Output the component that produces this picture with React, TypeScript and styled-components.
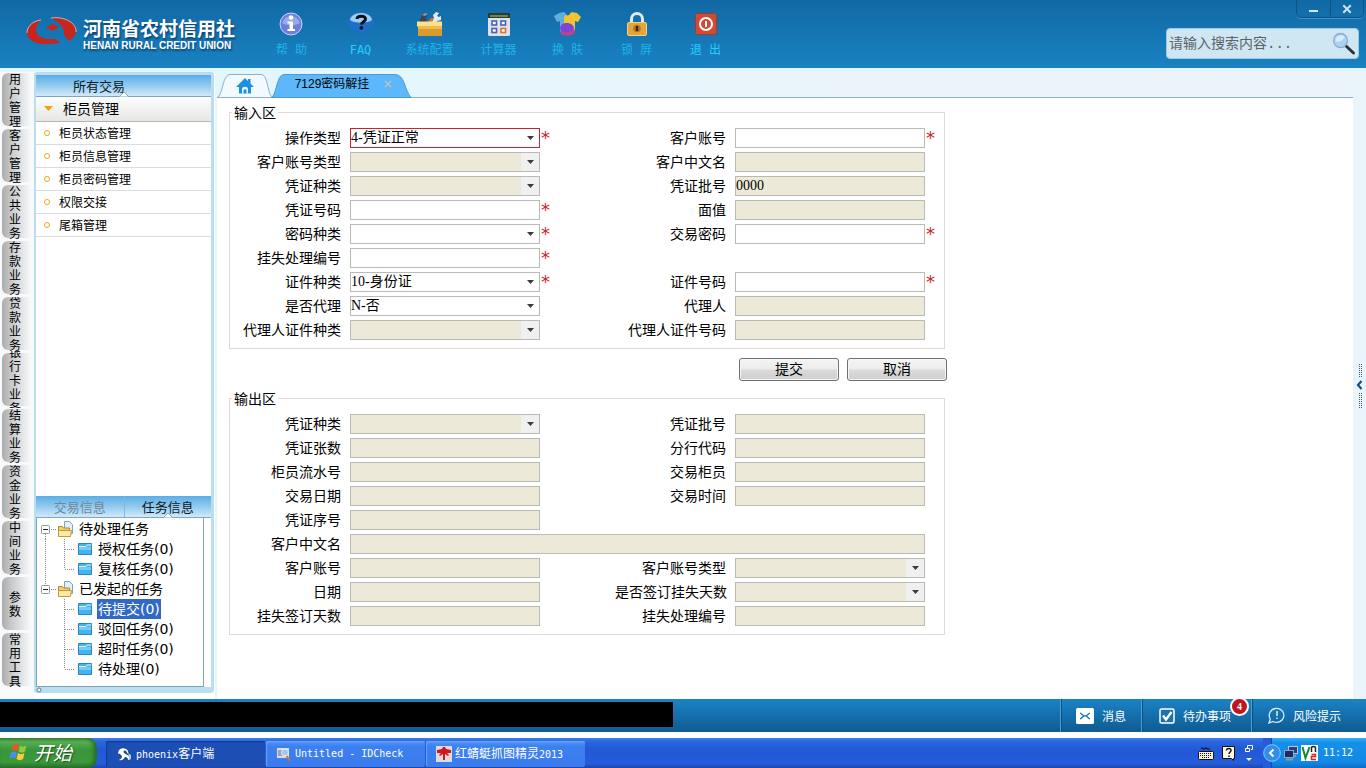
import React from "react";
import styled, { createGlobalStyle, css } from "styled-components";

const cjk = `"Noto Sans CJK SC", sans-serif`;
const sans = `"Liberation Sans", ${cjk}`;
const serif = `"Liberation Serif", ${cjk}`;
const mono = `"DejaVu Sans Mono", ${cjk}`;

const GlobalStyle = createGlobalStyle`
  * { box-sizing: border-box; }
  body { margin: 0; background: #fff; font-family: ${sans}; font-size: 14px; color: #000; }
  button, input, select { font: inherit; color: inherit; margin: 0; padding: 0; border: 0; border-radius: 0; background: none; }
  button { cursor: pointer; }
  ul { list-style: none; margin: 0; padding: 0; }
  svg { display: block; flex: none; }
`;

const Page = styled.div`
  min-height: 100vh;
  display: flex;
  flex-direction: column;
`;

/* ---------- header ---------- */

const Header = styled.header`
  height: 68px;
  display: flex;
  background: linear-gradient(#1169a5, #1a82c2);
`;

const Brand = styled.div`
  width: 257px;
  padding: 16px 0 0 26px;
  display: flex;
  align-items: flex-start;
  gap: 6px;
  color: #fff;
  text-shadow: 1px 2px 2px rgba(0, 30, 70, 0.6);
`;

const BrandName = styled.div`
  font: bold 19px/24px ${cjk};
  white-space: nowrap;
`;

const BrandLatin = styled.div`
  font: bold 10px/12px ${sans};
  white-space: nowrap;
`;

const Tools = styled.nav`
  flex: 1;
  display: flex;
`;

const Tool = styled.button<{ $bright?: boolean }>`
  width: 69px;
  padding-top: 11px;
  display: flex;
  flex-direction: column;
  align-items: center;
  gap: 4px;
  font: 12px/18px ${mono};
  white-space: pre;
  color: ${(p) => (p.$bright ? "#22d0fb" : "#1cb4ea")};
`;

const HeaderSide = styled.div`
  display: flex;
  flex-direction: column;
  align-items: flex-end;
  gap: 10px;
  padding-right: 7px;
`;

const WindowControls = styled.div`
  height: 18px;
  display: flex;
  margin-right: -5px;
  border: 1px solid #0d5488;
  border-top: 0;
  border-radius: 0 0 5px 5px;
  box-shadow: 0 1px 0 #3b93c9;
`;

const WindowButton = styled.button`
  width: 33px;
  display: grid;
  place-items: center;
  & + & { border-left: 1px solid #0d5488; }
`;

const Search = styled.label`
  width: 193px;
  height: 31px;
  display: flex;
  align-items: center;
  padding: 0 2px;
  border: 1px solid #9ccae5;
  border-radius: 4px;
  background: #cfe6f3;
`;

const SearchInput = styled.input`
  flex: 1;
  min-width: 0;
  outline: 0;
  font: 14px/20px "Liberation Mono", ${cjk};
  &::placeholder { color: #5a6268; opacity: 1; }
`;

/* ---------- body ---------- */

const Body = styled.div`
  flex: 1;
  display: flex;
  border-top: 4px solid #e2f5fc;
`;

const Rail = styled.nav`
  width: 34px;
  padding: 1px 0 0 2px;
  background: #f8f9fa;
`;

const RailTab = styled.button`
  width: 100%;
  height: 53px;
  margin-bottom: 3px;
  padding-right: 6px;
  overflow: clip;
  overflow-clip-margin: 2px;
  display: flex;
  align-items: center;
  justify-content: center;
  border-radius: 6px 0 0 6px;
  background: linear-gradient(90deg, #aaacad, #c8cacb 30%, #f8f9fa 90%);
`;

const RailText = styled.span`
  width: 12px;
  flex: none;
  margin: -2px 0;
  font: 12px/14px ${cjk};
  word-break: break-all;
`;

const Sidebar = styled.aside`
  width: 180px;
  margin-bottom: 6px;
  display: flex;
  flex-direction: column;
  border: solid #b9deee;
  border-width: 3px 3px 0 2px;
  border-radius: 3px;
`;

const BlueTabs = styled.div`
  height: 22px;
  display: flex;
  border-bottom: 1px solid #7ba7c4;
  background: linear-gradient(#5aaee5, #8cc7ee 45%, #d2e9f8);
`;

const BlueTab = styled.button<{ $muted?: boolean }>`
  position: relative;
  width: 50%;
  font: 13px/20px ${cjk};
  color: ${(p) => (p.$muted ? "#6f8798" : "#0c1a26")};
  & + & { border-left: 1px solid #86b8da; }
`;

const WideTab = styled(BlueTab)`
  width: 175px;
  padding-right: 49px;
`;

const Notch = styled.svg`
  position: absolute;
  left: 50%;
  bottom: -1px;
  margin-left: -6px;
`;

const Section = styled.button`
  height: 25px;
  display: flex;
  align-items: center;
  gap: 10px;
  padding: 0 0 2px 8px;
  border-bottom: 1px solid #b5b5b5;
  background: linear-gradient(#fdfdfd, #e6e6e4);
  font: 14px/20px ${cjk};
`;

const MenuItem = styled.a`
  height: 23px;
  display: flex;
  align-items: center;
  gap: 9px;
  padding-left: 8px;
  border-bottom: 1px solid #dcdcdc;
  font: 12px/18px ${cjk};
  color: #000;
  text-decoration: none;
`;

const Bullet = styled.span`
  width: 6px;
  height: 6px;
  border: 1px solid #eba91c;
  border-radius: 50%;
`;

const Spacer = styled.div`
  flex: 1;
`;

const Tree = styled.ul`
  margin-right: 7px;
  padding: 1px 0 7px;
  border: 1px solid #7fa3b8;
  border-top: 0;
`;

const TreeRow = styled.li`
  height: 20px;
  display: flex;
  align-items: center;
  font: 14px/20px "DejaVu Sans", ${cjk};
`;

const TreeLabel = styled.span<{ $selected?: boolean }>`
  margin-left: 4px;
  padding: 0 1px;
  white-space: nowrap;
  ${(p) => p.$selected && css`background: #316ac5; color: #fff;`}
`;

const SidebarFoot = styled.div`
  height: 6px;
  background: #b9deee;
`;

const Main = styled.main`
  flex: 1;
  min-width: 0;
  margin-left: 1px;
  border-left: 2px solid #e2f8fd;
`;

const TabStrip = styled.div`
  height: 26px;
  display: flex;
  align-items: flex-end;
  border-bottom: 1px solid #8fb0c2;
  background: linear-gradient(90deg, #e2f6fd, #ebf4fa 60%);
`;

const Tab = styled.div<{ $overlap?: boolean }>`
  display: grid;
  margin-bottom: -1px;
  margin-left: ${(p) => (p.$overlap ? "-2px" : "0")};
  > * { grid-area: 1 / 1; }
`;

const TabFace = styled.div<{ $titled?: boolean }>`
  position: relative;
  display: flex;
  align-items: center;
  justify-content: center;
  gap: 15px;
  padding-bottom: ${(p) => (p.$titled ? "3px" : "0")};
  padding-left: ${(p) => (p.$titled ? "4px" : "0")};
  font: 12px/18px ${sans};
`;

const PlainButton = styled.button`
  display: flex;
  align-items: center;
`;

const Form = styled.form`
  width: 718px;
  max-width: 100%;
  margin-left: 12px;
  padding-top: 6px;
`;

const Zone = styled.fieldset`
  width: 716px;
  margin: 0;
  padding: 8px 0;
  border: 1px solid #e0d8da;
`;

const ZoneTitle = styled.legend`
  margin-left: 2px;
  padding: 0 2px;
  font: 14px/16px ${cjk};
`;

const Fields = styled.div`
  display: grid;
  grid-template-columns: 385px 1fr;
  gap: 4px 0;
`;

const Field = styled.div<{ $wide?: boolean; $left?: boolean }>`
  display: flex;
  height: 20px;
  ${(p) => p.$left && css`grid-column: 1;`}
  ${(p) => p.$wide && css`grid-column: 1 / -1;`}
`;

const Caption = styled.label`
  width: 111px;
  margin-right: 9px;
  font: 14px/18px ${cjk};
  text-align: right;
  white-space: nowrap;
`;

const box = css`
  width: 100%;
  height: 20px;
  border: 1px solid #b9b9b6;
  font: 14px/18px ${serif};
  outline: 0;
  opacity: 1;
  color: #000;
`;

const TextBox = styled.input<{ $locked?: boolean }>`
  ${box}
  background: ${(p) => (p.$locked ? "#ece9d8" : "#fff")};
`;

const Picker = styled.select<{ $locked?: boolean; $alert?: boolean }>`
  ${box}
  appearance: none;
  border-color: ${(p) => (p.$alert ? "#bf2a30" : "#b9b9b6")};
  background: ${(p) => (p.$locked ? "linear-gradient(90deg, #ece9d8 170px, #f0f0f0 170px)" : "#fff")};
`;

const Control = styled.div<{ $wide?: boolean }>`
  width: ${(p) => (p.$wide ? "575px" : "190px")};
  display: grid;
  align-items: center;
  > * { grid-area: 1 / 1; }
`;

const DropArrow = styled.svg`
  justify-self: end;
  margin-right: 6px;
  pointer-events: none;
`;

const Required = styled.span`
  margin-left: 1px;
  font: 18px/20px "DejaVu Sans", sans-serif;
  color: #d0202a;
`;

const Actions = styled.div`
  display: flex;
  justify-content: flex-end;
  gap: 8px;
  padding: 9px 0;
`;

const FormButton = styled.button`
  width: 100px;
  height: 23px;
  padding-bottom: 2px;
  border: 1px solid #707070;
  border-radius: 3px;
  background: linear-gradient(#f4f4f4, #ececec 48%, #dadada 52%, #cfcfcf);
  box-shadow: inset 0 0 0 1px #f6f6f6;
  font: 14px/19px ${cjk};
`;

const EdgeStrip = styled.div`
  width: 13px;
  display: flex;
  align-items: center;
  justify-content: flex-end;
  background: #e9f4fb;
`;

/* ---------- status bar ---------- */

const StatusBar = styled.footer`
  height: 33px;
  display: flex;
  align-items: stretch;
  margin-bottom: 6px;
  background: linear-gradient(#1a83c6, #0f5b92);
`;

const Ticker = styled.div`
  width: 673px;
  height: 25px;
  margin-top: 3px;
  background: #000;
`;

const StatusItem = styled.button<{ $width: number; $pad: number }>`
  width: ${(p) => p.$width}px;
  padding-left: ${(p) => p.$pad}px;
  display: flex;
  align-items: center;
  gap: 8px;
  position: relative;
  border-left: 1px solid #4aa0d4;
  box-shadow: inset 1px 0 0 #0c4f80;
  color: #fff;
  font: 12px/18px ${cjk};
  white-space: nowrap;
`;

const Badge = styled.span`
  position: absolute;
  top: -2px;
  right: 2px;
  width: 19px;
  height: 19px;
  border: 2px solid #fff;
  border-radius: 50%;
  background: #c4141b;
  font: bold 10px/15px ${serif};
  text-align: center;
`;

/* ---------- taskbar ---------- */

const Taskbar = styled.div`
  height: 30px;
  display: flex;
  background: linear-gradient(#3a80ee, #2a66e0 12%, #2258d4 40%, #245cdc 85%, #1b45ab);
`;

const Start = styled.button`
  width: 97px;
  margin-right: 9px;
  padding: 0 0 3px 9px;
  display: flex;
  align-items: center;
  gap: 5px;
  border-radius: 0 9px 9px 0;
  background: linear-gradient(#3e8f3d, #58b052 12%, #3a953a 40%, #3b9a3b 80%, #2a732a);
  box-shadow: inset -3px 0 4px #246a28;
  color: #fff;
  font: italic 19px/24px ${cjk};
  text-shadow: 1px 1px 1px #1c4f1c;
`;

const Task = styled.button<{ $active?: boolean }>`
  width: 159px;
  height: 26px;
  margin: 3px 1px 0 0;
  padding-left: 10px;
  display: flex;
  align-items: center;
  gap: 3px;
  border-radius: 2px;
  background: ${(p) => (p.$active ? "#1c4eb4" : "linear-gradient(#5a99f8, #3c80f0 20%, #3a7bee)")};
  box-shadow: inset 1px 1px 1px ${(p) => (p.$active ? "#143a8c" : "#6ba6fa")};
  color: #fff;
  font: 12px/18px ${cjk};
  white-space: pre;
`;

const Narrow = styled.span`
  font: 10px/18px ${mono};
`;

const TrayTools = styled.div`
  margin-left: auto;
  display: flex;
  align-items: center;
  gap: 8px;
  padding-right: 9px;
`;

const Tray = styled.div`
  width: 103px;
  display: flex;
  align-items: center;
  gap: 2px;
  color: #fff;
  background: linear-gradient(90deg, #245cdc 8px, #0d4fa8 8px, #0d4fa8 9px, transparent 9px),
    linear-gradient(#35b0f4, #1590ea 15%, #118ae6 80%, #0f6cc4);
`;

const Clock = styled.time`
  margin-left: 3px;
  font: 10px/18px ${mono};
`;

/* ---------- drawings ---------- */

const Logo = () => (
  <svg width="51" height="31" viewBox="0 0 51 31">
    <path d="M15 4C6 5 1 11 1 17c0 7 10 12 21 11l12-1-4-4-9 0C14 22 10 18 10 14c0-4 2-7 5-10z" fill="#c8251f" />
    <path d="M25 2c13-2 26 5 25 14-1 4-4 7-7 9l-5-6c1-8-5-13-13-17z" fill="#c8251f" />
    <path d="M20 11l7-3 6 3-7 4z" fill="#c8251f" />
    <path d="M25 2c13-2 26 5 25 14M15 4C6 5 1 11 1 17" fill="none" stroke="#e8cdb8" strokeWidth="0.8" />
  </svg>
);

const HelpIcon = () => (
  <svg width="26" height="26" viewBox="0 0 26 26">
    <circle cx="12" cy="13" r="11" fill="#6a80da" stroke="#c9d6f5" />
    <path d="M3 12a9.300 9.300 0 0 1 18 0c-5 3-13 3-18 0z" fill="#98aaea" />
    <circle cx="12" cy="6.500" r="2.200" fill="#fff" />
    <path d="M8.500 10.500h5.500v7.500h2v2H8.500v-2h2v-5.500h-2z" fill="#fff" />
  </svg>
);

const FaqIcon = () => (
  <svg width="26" height="26" viewBox="0 0 26 26">
    <path d="M13 1c7 0 12.500 4 12.500 9.500 0 5-3.500 8.500-8.500 9.500 0 2 1 3.500 2.500 5-4 0-7-2-8-4.500C4.500 20 .5 16 .5 10.500.5 5 6 1 13 1z" fill="#1d6fc9" />
    <path d="M13 2c6 0 10.500 3 11 7-4 3.500-18 3.500-22 0C2.500 5 7 2 13 2z" fill="#9bcdf3" />
    <path d="M9 8C9 4.500 17.500 4 17.500 8c0 3-4 3-4 5.500" fill="none" stroke="#0a0f18" strokeWidth="3" />
    <circle cx="13.400" cy="16.800" r="1.900" fill="#0a0f18" />
  </svg>
);

const ToolboxIcon = () => (
  <svg width="26" height="26" viewBox="0 0 26 26">
    <path d="M2 12l2-6 3-4 4 2-2 3 1 5z" fill="#3b4652" />
    <path d="M5 4l3-2 3 1-3 2z" fill="#8b98a5" />
    <path d="M11 11l3-4 4 0-2 5z" fill="#e2742a" />
    <path d="M15 12l2-5-1-3 3-3 3 1-2 3 2 1 2-1 0 4-4 1-1 3z" fill="#e4ecf2" />
    <path d="M0 10.500h25v5H0z" fill="#ffe08a" />
    <path d="M1 15h24v10H1z" fill="#dc9b2f" />
    <path d="M1 15h24v3H1z" fill="#f0b850" />
  </svg>
);

const CalculatorIcon = () => (
  <svg width="24" height="26" viewBox="0 0 24 26">
    <rect x="1" y="2" width="22" height="23" rx="1.500" fill="#dfe2e8" />
    <path d="M1 2h22v5H1z" fill="#2d3a33" />
    <path d="M3 4h18v2H3z" fill="#5d8a55" />
    <g fill="#fff" stroke="#4a5fb8" strokeWidth="1.600">
      <rect x="5" y="10" width="4.500" height="4" />
      <rect x="14" y="10" width="4.500" height="4" />
      <rect x="5" y="17.500" width="4.500" height="4" />
      <rect x="14" y="17.500" width="4.500" height="4" stroke="#e0702c" />
    </g>
  </svg>
);

const ShirtIcon = () => (
  <svg width="27" height="26" viewBox="0 0 27 26">
    <path d="M5 2l5-1 3 3v17H6V10l-3 1L0 5z" fill="#62addb" />
    <path d="M12 4c2 1 4 0 5-3l6 1 4 4-3 5-3-1v10H10V6z" fill="#f2c530" />
    <path d="M6 17c1-7 13-6 14 0l-1 4H7z" fill="#7b46d6" />
    <path d="M6 20c4 2 10 2 15-2l-1 5c-4 2-9 2-13 0z" fill="#c4408a" />
  </svg>
);

const LockIcon = () => (
  <svg width="22" height="26" viewBox="0 0 22 26">
    <path d="M5.500 13V8a5.500 5.500 0 0 1 11 0v5" fill="none" stroke="#e4e8ec" strokeWidth="3" />
    <rect x="1.500" y="11.500" width="19" height="13" rx="1.500" fill="#e3a63a" stroke="#f6d27c" />
    <circle cx="11" cy="17.500" r="3.800" fill="#b9711d" />
    <path d="M11 15v5" stroke="#3c2206" strokeWidth="2.200" />
  </svg>
);

const ExitIcon = () => (
  <svg width="24" height="26" viewBox="0 0 24 26">
    <rect x="1.500" y="2.500" width="21" height="21" rx="2" fill="#d04a34" stroke="#a9372a" />
    <circle cx="12" cy="13" r="6" fill="none" stroke="#fff" strokeWidth="2" />
    <path d="M12 10v6" stroke="#fff" strokeWidth="2" />
  </svg>
);

const Magnifier = () => (
  <svg width="24" height="24" viewBox="0 0 24 24">
    <path d="M13.500 13.500l8 7.500" stroke="#2c3138" strokeWidth="3" strokeLinecap="round" />
    <circle cx="8.500" cy="8.500" r="7" fill="#a9d2fa" stroke="#93abca" strokeWidth="1.300" />
    <path d="M3.500 9c3 2 7 0 9-4-3-3-9-1-9 4z" fill="#d9edfe" />
  </svg>
);

const HomeTabShape = () => (
  <svg width="56" height="25" viewBox="0 0 56 25">
    <path d="M1 24.500C6 19 6 1.500 13 1.500h31c7 0 6 17 11 23" fill="#f1fafe" stroke="#8fb0c2" />
    <path d="M1 24.500h54" stroke="#8fb0c2" />
  </svg>
);

const ActiveTabShape = () => (
  <svg width="141" height="25" viewBox="0 0 141 25">
    <path d="M1 24.500C6 19 6 1.500 13 1.500h111c10 0 9 15 16 23z" fill="#5cb8fa" stroke="#4c9bd0" />
  </svg>
);

const HomeIcon = () => (
  <svg width="18" height="16" viewBox="0 0 18 16">
    <path d="M9 0l3 3V1h2.500v4.500L18 9h-3v6.500H3V9H0z" fill="#1d90e0" />
    <path d="M6 15.500V11c0-3 6-3 6 0v4.500h-1.500V11.500h-3v4z" fill="#eaf6fe" />
  </svg>
);

const Cross = ({ color, size }: { color: string; size: number }) => (
  <svg width={size} height={size} viewBox="0 0 8 8">
    <path d="M1 1l6 6M7 1L1 7" stroke={color} strokeWidth="1.500" />
  </svg>
);

const TabNotch = () => (
  <Notch width="12" height="6" viewBox="0 0 12 6">
    <path d="M1.500 5.500L6 1l4.500 4.500" fill="#fff" stroke="#7ba7c4" />
  </Notch>
);

const RootGuide = ({ last }: { last?: boolean }) => (
  <svg width="20" height="20" viewBox="0 0 20 20">
    <g stroke="#8a8a8a" strokeDasharray="1 1">
      <path d={last ? "M8.500 0v6" : "M8.500 15v5"} />
      <path d="M14 10.500h6" />
    </g>
    <rect x="4.500" y="6.500" width="8" height="8" rx="1" fill="#fff" stroke="#8a9aa8" />
    <path d="M6 10.500h5" stroke="#222" />
  </svg>
);

const LeafGuide = ({ trunk, last }: { trunk?: boolean; last?: boolean }) => (
  <svg width="40" height="20" viewBox="0 0 40 20">
    <g stroke="#8a8a8a" strokeDasharray="1 1">
      {trunk && <path d="M8.500 0v20" />}
      <path d={last ? "M27.500 0v10" : "M27.500 0v20"} />
      <path d="M28 10.500h9" />
    </g>
  </svg>
);

const OpenFolder = () => (
  <svg width="17" height="18" viewBox="0 0 17 18">
    <path d="M7.500 1.500h5l3 3v9h-8z" fill="#e4effb" stroke="#7ba0cc" />
    <path d="M1.500 6.500h4l1 1.500h6v8h-11z" fill="#f3cf6b" stroke="#b28a2a" />
    <path d="M1.500 10.500h13l-1 6h-12z" fill="#fce9a4" stroke="#c39a38" />
  </svg>
);

const BlueFolder = () => (
  <svg width="16" height="14" viewBox="0 0 16 14">
    <path d="M1.500 1.500h13v11h-13z" fill="#45b4ee" stroke="#2388c4" />
    <path d="M2 4.500h7l1-1.500h4.500" fill="none" stroke="#d8f1fd" />
    <path d="M2 5h12v3H2z" fill="#74cbf6" />
  </svg>
);

const EdgeHandle = () => (
  <svg width="11" height="46" viewBox="0 0 11 46">
    <g stroke="#4a5a70" strokeDasharray="1 1">
      <path d="M4.500 1v13M6.500 1v13M4.500 30v15M6.500 30v15" />
    </g>
    <path d="M6.500 18L3 22l3.500 4" fill="none" stroke="#12508e" strokeWidth="2.200" />
  </svg>
);

const MailIcon = () => (
  <svg width="18" height="16" viewBox="0 0 18 16">
    <rect width="18" height="16" rx="1.500" fill="#fff" />
    <path d="M4 5c2 1 3 3 5 3s3-2 5-3M4 11c2-1 2.500-2 3.500-3M14 11c-2-1-2.500-2-3.500-3" fill="none" stroke="#1a77b5" strokeWidth="1.300" />
  </svg>
);

const TodoIcon = () => (
  <svg width="16" height="16" viewBox="0 0 16 16">
    <rect x="1" y="1" width="14" height="14" rx="1.500" fill="#1d74ad" stroke="#fff" strokeWidth="1.500" />
    <path d="M4 7.500l3 4 5.500-7.500" fill="none" stroke="#fff" strokeWidth="2.300" />
  </svg>
);

const RiskIcon = () => (
  <svg width="17" height="17" viewBox="0 0 17 17">
    <path d="M1 16l1.300-4A7.300 7 0 1 1 5 14.500z" fill="none" stroke="#d8ecf8" strokeWidth="1.300" />
    <path d="M9 4v5M9 10.500v1.500" stroke="#fff" strokeWidth="1.300" />
  </svg>
);

const WindowsFlag = () => (
  <svg width="20" height="20" viewBox="0 0 20 20">
    <path d="M4 3c2-1.500 4-1.500 6 0L8.500 9c-2-1.500-4-1.500-6 0z" fill="#e8562a" />
    <path d="M11 3.500c2 1.500 4 1.500 6.500 0L16 9.500c-2 1.500-4.500 1.500-6.500 0z" fill="#8ccc3a" />
    <path d="M2 10.500c2-1.500 4-1.500 6 0L6.500 16.500c-2-1.500-4-1.500-6 0z" fill="#4a8ef0" />
    <path d="M9 11c2 1.500 4 1.500 6.500 0L14 17c-2 1.500-4.500 1.500-6.500 0z" fill="#f8cf3a" />
  </svg>
);

const PhoenixIcon = () => (
  <svg width="17" height="16" viewBox="0 0 17 16">
    <path d="M3 8c-1-4 2-7 6-6l5 4-1 7-6 1z" fill="#164a78" />
    <path d="M2 8c0-5 4-7 8-5 2 1 3 3 2 5l-2-3c-2-1-3 0-2 2l5 3c2 1 1 4-1 4 0-2-1-3-3-3-1 2-3 4-6 3 2-1 3-2 3-4C4 8 3 7 2 8z" fill="#fff" />
    <path d="M12 7l3 2 0 4-2 1 0-3z" fill="#a9cbe6" />
  </svg>
);

const IdCheckIcon = () => (
  <svg width="16" height="16" viewBox="0 0 16 16">
    <rect x="1" y="2" width="12" height="10" fill="#d8dde4" />
    <path d="M2 4h5v6H2z" fill="#9aa4b4" />
    <circle cx="9" cy="6.500" r="3.500" fill="#9ec9f3" stroke="#e8edf2" />
    <path d="M10.500 10l3.500 4.500" stroke="#d8742a" strokeWidth="2" />
  </svg>
);

const DragonflyIcon = () => (
  <svg width="16" height="16" viewBox="0 0 16 16">
    <rect width="16" height="16" fill="#dcdcdc" />
    <path d="M1 4l5-1 1-2h2l1 2 5 1v3h-4l2 2-1 1-3-2v6H7V8l-3 2-1-1 2-2H1z" fill="#d3141c" />
  </svg>
);

const KeyboardIcon = () => (
  <svg width="16" height="14" viewBox="0 0 16 14">
    <path d="M3 2h2v1h2V2h2v1h3" fill="none" stroke="#111" />
    <rect x=".5" y="5.500" width="15" height="8" rx="1" fill="#f3efdc" stroke="#111" />
    <path d="M2 7.500h12M2 9.500h12M4 11.500h8" stroke="#111" strokeDasharray="1 1" />
  </svg>
);

const QuestionIcon = () => (
  <svg width="14" height="15" viewBox="0 0 14 15">
    <path d="M.5.500h12v12h-1v2l-2-2h-9z" fill="#fffbe0" stroke="#111" />
    <path d="M4.500 4.500c0-3 5-2.500 4.500 0 0 1.500-2 1.500-2 3.500M7 9.500v1.500" fill="none" stroke="#111" strokeWidth="1.500" />
  </svg>
);

const RestoreIcon = () => (
  <svg width="10" height="18" viewBox="0 0 10 18">
    <path d="M3.500 4V1.500h5v4H7M1.500 4.500h4v3h-4z" fill="none" stroke="#fff" />
    <path d="M2 14h6l-3 3z" fill="#fff" />
  </svg>
);

const TrayArrow = () => (
  <svg width="18" height="18" viewBox="0 0 18 18">
    <circle cx="9" cy="9" r="8.300" fill="#2f8df0" stroke="#8cc8fa" />
    <path d="M10.500 5.500L7 9l3.500 3.500" fill="none" stroke="#fff" strokeWidth="2" />
  </svg>
);

const NetworkIcon = () => (
  <svg width="16" height="16" viewBox="0 0 16 16">
    <rect x="5.500" y="1.500" width="9" height="7" fill="#26407c" stroke="#b7c4dc" />
    <rect x="1.500" y="5.500" width="9" height="7" fill="#1b2d60" stroke="#94a4c4" />
    <path d="M3 14.500h7M12 10v2" stroke="#8a97b2" strokeWidth="2" />
  </svg>
);

const VncIcon = () => (
  <svg width="17" height="16" viewBox="0 0 17 16">
    <rect width="17" height="16" fill="#fff" />
    <path d="M1.500 2L4.500 13 8.500 2" fill="none" stroke="#158a2c" strokeWidth="2" />
    <path d="M10.500 7V3c0-2 4-2 4 0v4" fill="none" stroke="#222" strokeWidth="1.500" />
    <path d="M10.500 9.500h4v2h-4v3h4.500" fill="none" stroke="#d22" strokeWidth="1.500" />
  </svg>
);

/* ---------- form ---------- */

type FieldSpec = {
  id: string;
  label: string;
  kind?: "text" | "select";
  locked?: boolean;
  required?: boolean;
  alert?: boolean;
  value?: string;
  left?: boolean;
  wide?: boolean;
};

const inputFields: FieldSpec[] = [
  { id: "opType", label: "操作类型", kind: "select", value: "4-凭证正常", required: true, alert: true },
  { id: "account", label: "客户账号", required: true },
  { id: "accountType", label: "客户账号类型", kind: "select", locked: true },
  { id: "customer", label: "客户中文名", locked: true },
  { id: "voucherType", label: "凭证种类", kind: "select", locked: true },
  { id: "voucherBatch", label: "凭证批号", locked: true, value: "0000" },
  { id: "voucherNo", label: "凭证号码", required: true },
  { id: "faceValue", label: "面值", locked: true },
  { id: "pwdType", label: "密码种类", kind: "select", required: true },
  { id: "pwd", label: "交易密码", required: true },
  { id: "lossNo", label: "挂失处理编号", required: true, left: true },
  { id: "idType", label: "证件种类", kind: "select", value: "10-身份证", required: true, left: true },
  { id: "idNo", label: "证件号码", required: true },
  { id: "isAgent", label: "是否代理", kind: "select", value: "N-否" },
  { id: "agent", label: "代理人", locked: true },
  { id: "agentIdType", label: "代理人证件种类", kind: "select", locked: true },
  { id: "agentIdNo", label: "代理人证件号码", locked: true },
];

const outputFields: FieldSpec[] = [
  { id: "oVoucherType", label: "凭证种类", kind: "select", locked: true },
  { id: "oBatch", label: "凭证批号", locked: true },
  { id: "oCount", label: "凭证张数", locked: true },
  { id: "oBranch", label: "分行代码", locked: true },
  { id: "oSerial", label: "柜员流水号", locked: true },
  { id: "oTeller", label: "交易柜员", locked: true },
  { id: "oDate", label: "交易日期", locked: true },
  { id: "oTime", label: "交易时间", locked: true },
  { id: "oSeq", label: "凭证序号", locked: true, left: true },
  { id: "oCustomer", label: "客户中文名", locked: true, wide: true },
  { id: "oAccount", label: "客户账号", locked: true },
  { id: "oAccountType", label: "客户账号类型", kind: "select", locked: true },
  { id: "oDay", label: "日期", locked: true },
  { id: "oSigned", label: "是否签订挂失天数", kind: "select", locked: true },
  { id: "oSignedDays", label: "挂失签订天数", locked: true },
  { id: "oLossNo", label: "挂失处理编号", locked: true },
];

const FieldRow = ({ f }: { f: FieldSpec }) => (
  <Field $wide={f.wide} $left={f.left}>
    <Caption htmlFor={f.id}>{f.label}</Caption>
    <Control $wide={f.wide}>
      {f.kind === "select" ? (
        <>
          <Picker id={f.id} $locked={f.locked} $alert={f.alert} disabled={f.locked}>
            <option>{f.value ?? ""}</option>
          </Picker>
          <DropArrow width="7" height="4" viewBox="0 0 7 4">
            <path d="M0 0h7L3.500 4z" fill="#3c3c3c" />
          </DropArrow>
        </>
      ) : (
        <TextBox id={f.id} $locked={f.locked} readOnly={f.locked} defaultValue={f.value} />
      )}
    </Control>
    {f.required && <Required>*</Required>}
  </Field>
);

const tools = [
  { label: "帮 助", icon: <HelpIcon /> },
  { label: "FAQ", icon: <FaqIcon />, bright: true },
  { label: "系统配置", icon: <ToolboxIcon /> },
  { label: "计算器", icon: <CalculatorIcon /> },
  { label: "换 肤", icon: <ShirtIcon /> },
  { label: "锁 屏", icon: <LockIcon /> },
  { label: "退 出", icon: <ExitIcon />, bright: true },
];

const railTabs = [
  "用户管理", "客户管理", "公共业务", "存款业务", "贷款业务", "银行卡业务",
  "结算业务", "资金业务", "中间业务", "参数", "常用工具",
];

const menu = ["柜员状态管理", "柜员信息管理", "柜员密码管理", "权限交接", "尾箱管理"];

const tree = [
  { label: "待处理任务", leaves: ["授权任务(0)", "复核任务(0)"] },
  { label: "已发起的任务", leaves: ["待提交(0)", "驳回任务(0)", "超时任务(0)", "待处理(0)"] },
];

export default function App() {
  return (
    <Page>
      <GlobalStyle />
      <Header>
        <Brand>
          <Logo />
          <div>
            <BrandName>河南省农村信用社</BrandName>
            <BrandLatin>HENAN RURAL CREDIT UNION</BrandLatin>
          </div>
        </Brand>
        <Tools>
          {tools.map((t) => (
            <Tool key={t.label} $bright={t.bright}>
              {t.icon}
              {t.label}
            </Tool>
          ))}
        </Tools>
        <HeaderSide>
          <WindowControls>
            <WindowButton aria-label="最小化">
              <svg width="9" height="8" viewBox="0 0 9 8"><path d="M0 6h9" stroke="#cfe6f4" strokeWidth="2" /></svg>
            </WindowButton>
            <WindowButton aria-label="关闭"><Cross color="#cfe6f4" size={10} /></WindowButton>
          </WindowControls>
          <Search>
            <SearchInput placeholder="请输入搜索内容..." aria-label="搜索" />
            <Magnifier />
          </Search>
        </HeaderSide>
      </Header>

      <Body>
        <Rail>
          {railTabs.map((t) => (
            <RailTab key={t}><RailText>{t}</RailText></RailTab>
          ))}
        </Rail>

        <Sidebar>
          <BlueTabs>
            <WideTab>所有交易<TabNotch /></WideTab>
          </BlueTabs>
          <Section>
            <svg width="9" height="5" viewBox="0 0 9 5"><path d="M0 0h9L4.500 5z" fill="#f0a010" /></svg>
            柜员管理
          </Section>
          {menu.map((m) => (
            <MenuItem key={m} href="#"><Bullet />{m}</MenuItem>
          ))}
          <Spacer />
          <BlueTabs>
            <BlueTab $muted>交易信息</BlueTab>
            <BlueTab>任务信息<TabNotch /></BlueTab>
          </BlueTabs>
          <Tree>
            {tree.map((group, g) => (
              <React.Fragment key={group.label}>
                <TreeRow>
                  <RootGuide last={g === tree.length - 1} />
                  <OpenFolder />
                  <TreeLabel>{group.label}</TreeLabel>
                </TreeRow>
                {group.leaves.map((leaf, i) => (
                  <TreeRow key={leaf}>
                    <LeafGuide trunk={g === 0} last={i === group.leaves.length - 1} />
                    <BlueFolder />
                    <TreeLabel $selected={leaf === "待提交(0)"}>{leaf}</TreeLabel>
                  </TreeRow>
                ))}
              </React.Fragment>
            ))}
          </Tree>
          <SidebarFoot>
            <svg width="6" height="6" viewBox="0 0 6 6"><circle cx="3" cy="3" r="2" fill="#fff" stroke="#5f7f92" /></svg>
          </SidebarFoot>
        </Sidebar>

        <Main>
          <TabStrip>
            <Tab>
              <HomeTabShape />
              <TabFace>
                <PlainButton aria-label="首页"><HomeIcon /></PlainButton>
              </TabFace>
            </Tab>
            <Tab $overlap>
              <ActiveTabShape />
              <TabFace $titled>
                <PlainButton>7129密码解挂</PlainButton>
                <PlainButton aria-label="关闭标签"><Cross color="#b4c2cc" size={8} /></PlainButton>
              </TabFace>
            </Tab>
          </TabStrip>
          <Form onSubmit={(e) => e.preventDefault()}>
            <Zone>
              <ZoneTitle>输入区</ZoneTitle>
              <Fields>{inputFields.map((f) => <FieldRow key={f.id} f={f} />)}</Fields>
            </Zone>
            <Actions>
              <FormButton type="submit">提交</FormButton>
              <FormButton type="button">取消</FormButton>
            </Actions>
            <Zone>
              <ZoneTitle>输出区</ZoneTitle>
              <Fields>{outputFields.map((f) => <FieldRow key={f.id} f={f} />)}</Fields>
            </Zone>
          </Form>
        </Main>
        <EdgeStrip>
          <PlainButton aria-label="展开侧栏"><EdgeHandle /></PlainButton>
        </EdgeStrip>
      </Body>

      <StatusBar>
        <Ticker />
        <Spacer />
        <StatusItem $width={81} $pad={15}><MailIcon />消息</StatusItem>
        <StatusItem $width={110} $pad={17}><TodoIcon />待办事项<Badge>4</Badge></StatusItem>
        <StatusItem $width={115} $pad={16}><RiskIcon />风险提示</StatusItem>
      </StatusBar>

      <Taskbar>
        <Start><WindowsFlag />开始</Start>
        <Task $active><PhoenixIcon /><span><Narrow>phoenix</Narrow>客户端</span></Task>
        <Task><IdCheckIcon /><Narrow>Untitled - IDCheck</Narrow></Task>
        <Task><DragonflyIcon /><span>红蜻蜓抓图精灵<Narrow>2013</Narrow></span></Task>
        <TrayTools>
          <KeyboardIcon />
          <QuestionIcon />
          <RestoreIcon />
        </TrayTools>
        <Tray>
          <TrayArrow />
          <NetworkIcon />
          <VncIcon />
          <Clock>11:12</Clock>
        </Tray>
      </Taskbar>
    </Page>
  );
}
